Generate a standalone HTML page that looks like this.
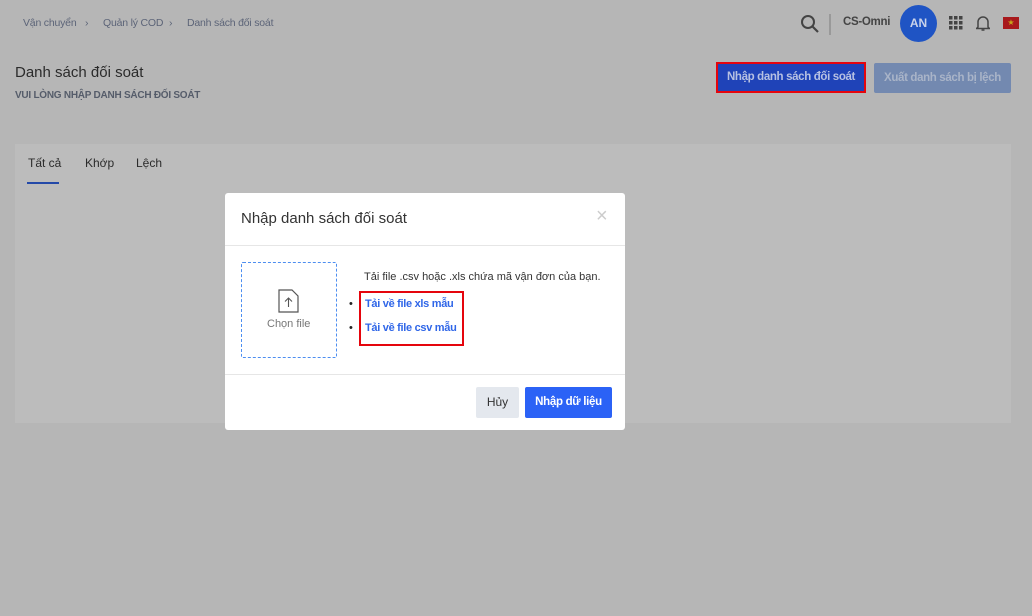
<!DOCTYPE html><html><head><meta charset="utf-8"><style>
*{box-sizing:border-box;margin:0;padding:0}
body{width:1032px;height:616px;background:#b6b6b6;font-family:"Liberation Sans",sans-serif;position:relative;overflow:hidden}
.a{position:absolute;white-space:nowrap}
.bc{font-size:10.5px;color:#5c6478;top:17px;letter-spacing:-0.2px}
</style></head><body>
<div class="a bc" style="left:23px">Vận chuyển</div>
<div class="a bc" style="left:85px">›</div>
<div class="a bc" style="left:103px">Quản lý COD</div>
<div class="a bc" style="left:169px">›</div>
<div class="a bc" style="left:187px">Danh sách đối soát</div>
<svg class="a" style="left:800px;top:14px" width="20" height="20" viewBox="0 0 20 20"><circle cx="8" cy="8" r="6" fill="none" stroke="#444" stroke-width="2"/><path d="M12.5 12.5L18 18" stroke="#444" stroke-width="2.2"/></svg>
<div class="a" style="left:829px;top:14px;width:2px;height:21px;background:#999"></div>
<div class="a" style="left:843px;top:16px;font-size:11.5px;font-weight:bold;color:#444;letter-spacing:-0.3px">CS-Omni</div>
<div class="a" style="left:900px;top:5px;width:37px;height:37px;border-radius:50%;background:#1f54c4;color:#c9d3ea;font-size:12px;font-weight:bold;text-align:center;line-height:37px">AN</div>
<svg class="a" style="left:949px;top:16px" width="14" height="14"><g fill="#444"><rect x="0" y="0" width="3.5" height="3.5"/><rect x="5" y="0" width="3.5" height="3.5"/><rect x="10" y="0" width="3.5" height="3.5"/><rect x="0" y="5" width="3.5" height="3.5"/><rect x="5" y="5" width="3.5" height="3.5"/><rect x="10" y="5" width="3.5" height="3.5"/><rect x="0" y="10" width="3.5" height="3.5"/><rect x="5" y="10" width="3.5" height="3.5"/><rect x="10" y="10" width="3.5" height="3.5"/></g></svg>
<svg class="a" style="left:976px;top:14px" width="14" height="18" viewBox="0 0 14 18"><path d="M2 13V8a5 5 0 0 1 10 0v5l1.5 1.5h-13z" fill="none" stroke="#444" stroke-width="1.5"/><path d="M5.5 16h3" stroke="#444" stroke-width="1.5"/></svg>
<div class="a" style="left:1003px;top:17px;width:16px;height:12px;background:#a8191c;color:#c9a61a;font-size:8px;text-align:center;line-height:12px">★</div>
<div class="a" style="left:15px;top:64px;font-size:15px;color:#2b2b2b">Danh sách đối soát</div>
<div class="a" style="left:15px;top:90px;font-size:10px;font-weight:bold;color:#555c6a;letter-spacing:-0.25px">VUI LÒNG NHẬP DANH SÁCH ĐỐI SOÁT</div>
<div class="a" style="left:716px;top:62px;width:150px;height:31px;background:#1f43b8;border:2px solid #e5050d;color:#b7c1e2;font-size:11.5px;font-weight:bold;text-align:center;line-height:27px;letter-spacing:-0.35px">Nhập danh sách đối soát</div>
<div class="a" style="left:874px;top:63px;width:137px;height:30px;background:#7389b0;border-radius:2px;color:#a9b4c8;font-size:11.5px;font-weight:bold;text-align:center;line-height:30px;letter-spacing:-0.35px">Xuất danh sách bị lệch</div>
<div class="a" style="left:15px;top:144px;width:996px;height:279px;background:#bcbcbc"></div>
<div class="a" style="left:28px;top:156px;font-size:12px;color:#2b2b2b">Tất cả</div>
<div class="a" style="left:85px;top:156px;font-size:12px;color:#2b2b2b">Khớp</div>
<div class="a" style="left:136px;top:156px;font-size:12px;color:#2b2b2b">Lệch</div>
<div class="a" style="left:27px;top:182px;width:32px;height:2px;background:#2449a8"></div>
<div class="a" style="left:225px;top:193px;width:400px;height:237px;background:#fff;border-radius:3px">
<div class="a" style="left:16px;top:17px;font-size:15px;color:#333">Nhập danh sách đối soát</div>
<div class="a" style="left:371px;top:12px;font-size:20px;color:#ccc">×</div>
<div class="a" style="left:0;top:52px;width:400px;height:1px;background:#e6e6e6"></div>
<div class="a" style="left:16px;top:69px;width:96px;height:96px;border:1px dashed #4d8ef0;border-radius:2px"></div>
<svg class="a" style="left:53px;top:96px" width="22" height="24" viewBox="0 0 22 24"><path d="M1 1h13l6 6v16H1z" fill="none" stroke="#555" stroke-width="1.2"/><path d="M10.5 18V9M7 12.5l3.5-3.5 3.5 3.5" fill="none" stroke="#555" stroke-width="1.1"/></svg>
<div class="a" style="left:42px;top:125px;font-size:11px;color:#777">Chọn file</div>
<div class="a" style="left:139px;top:78px;font-size:11px;color:#333">Tải file .csv hoặc .xls chứa mã vận đơn của bạn.</div>
<div class="a" style="left:134px;top:98px;width:105px;height:55px;border:2px solid #e5050d"></div>
<div class="a" style="left:124px;top:105px;font-size:11px;color:#222">•</div>
<div class="a" style="left:124px;top:129px;font-size:11px;color:#222">•</div>
<div class="a" style="left:140px;top:105px;font-size:11px;font-weight:bold;color:#2f66e8;letter-spacing:-0.3px">Tải về file xls mẫu</div>
<div class="a" style="left:140px;top:129px;font-size:11px;font-weight:bold;color:#2f66e8;letter-spacing:-0.3px">Tải về file csv mẫu</div>
<div class="a" style="left:0;top:181px;width:400px;height:1px;background:#e6e6e6"></div>
<div class="a" style="left:251px;top:194px;width:43px;height:31px;background:#e4e8ee;border-radius:2px;font-size:12px;color:#333;text-align:center;line-height:31px">Hủy</div>
<div class="a" style="left:300px;top:194px;width:87px;height:31px;background:#2b62f6;border-radius:2px;font-size:11.5px;font-weight:bold;color:#fff;text-align:center;line-height:31px;letter-spacing:-0.3px">Nhập dữ liệu</div>
</div>
</body></html>
